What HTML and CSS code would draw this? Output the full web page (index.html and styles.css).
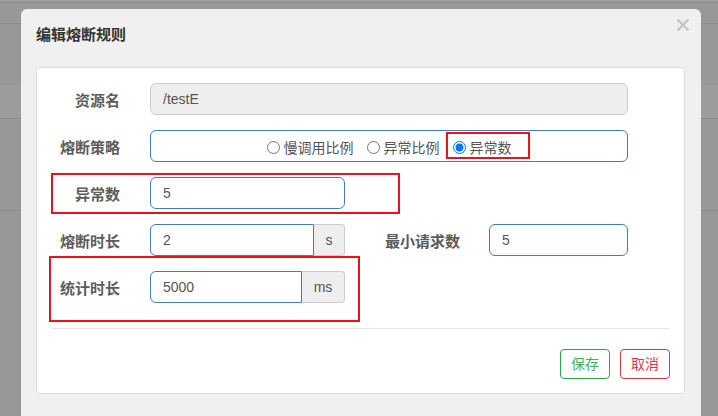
FILE: index.html
```html
<!DOCTYPE html>
<html lang="zh-CN">
<head>
<meta charset="utf-8">
<title>编辑熔断规则</title>
<link rel="stylesheet" href="styles.css">
</head>
<body>
<div class="page">
  <div class="bg-top"></div>
  <div class="bg-nav"></div>
  <div class="bg-band"></div>
  <div class="bg-block"></div>
  <div class="bg-rest"></div>
</div>

<div class="modal">
  <div class="modal-header">
    <div class="modal-title">编辑熔断规则</div>
    <svg class="close" width="12" height="12" viewBox="0 0 12 12"><path d="M1.5 1.5 L10.5 10.5 M10.5 1.5 L1.5 10.5" stroke="#c6c6c6" stroke-width="2.4" stroke-linecap="square"/></svg>
  </div>
  <div class="card">
    <div class="form">
      <div class="row">
        <div class="label">资源名</div>
        <div class="input disabled w-full">/testE</div>
      </div>
      <div class="row">
        <div class="label">熔断策略</div>
        <div class="radio-box w-full">
          <label class="opt"><input type="radio" name="s"><span>慢调用比例</span></label>
          <label class="opt"><input type="radio" name="s"><span>异常比例</span></label>
          <label class="opt"><input type="radio" name="s" checked><span>异常数</span></label>
        </div>
      </div>
      <div class="row">
        <div class="label">异常数</div>
        <div class="input focus w-195">5</div>
      </div>
      <div class="row">
        <div class="label">熔断时长</div>
        <div class="group">
          <div class="input focus grp w-164">2</div>
          <div class="addon w-31">s</div>
        </div>
        <div class="label2">最小请求数</div>
        <div class="input focus w-139">5</div>
      </div>
      <div class="row">
        <div class="label">统计时长</div>
        <div class="group">
          <div class="input focus grp w-152">5000</div>
          <div class="addon w-43">ms</div>
        </div>
      </div>
    </div>
    <div class="divider"></div>
    <div class="actions">
      <button class="btn btn-save">保存</button>
      <button class="btn btn-cancel">取消</button>
    </div>
    <div class="mark mark-radio"></div>
    <div class="mark mark-count"></div>
    <div class="mark mark-stat"></div>
  </div>
</div>
</body>
</html>
```

FILE: styles.css
```css
html, body {
  margin: 0;
  padding: 0;
}
body {
  width: 718px;
  height: 416px;
  overflow: hidden;
  background: #989898;
  font-family: "Liberation Sans", "Noto Sans CJK SC", sans-serif;
  position: relative;
}
.page {
  display: flex;
  flex-direction: column;
}
.bg-top {
  height: 2px;
  background: #9a9a9a;
  border-bottom: 1px solid #8a8a8a;
}
.bg-nav {
  height: 20px;
  border-bottom: 1px solid #8c8c8c;
}
.bg-band {
  height: 61px;
}
.bg-block {
  height: 33px;
  background: #9b9c9e;
  border-bottom: 1px solid #8c8c8c;
}
.bg-rest {
  height: 91px;
  border-bottom: 1px solid #8a8a8a;
}

.modal {
  position: absolute;
  left: 21px;
  top: 9px;
  width: 650px;
  height: 407px;
  padding: 0 15px;
  background: #f0f0f0;
  border-radius: 6px 6px 0 0;
  overflow: hidden;
}
.modal-header {
  height: 58px;
  position: relative;
}
.modal-title {
  padding-top: 16px;
  line-height: 20px;
  font-size: 15px;
  font-weight: bold;
  color: #333;
}
.close {
  position: absolute;
  top: 10px;
  right: -3px;
  display: block;
}

.card {
  position: relative;
  width: 617px;
  background: #fff;
  border: 1px solid #dcdcdc;
  border-radius: 4px;
  padding: 15px 15px 14px;
}
.form {
  display: flex;
  flex-direction: column;
  gap: 15px;
}
.row {
  display: flex;
  align-items: center;
  height: 32px;
}
.label {
  width: 68px;
  margin-right: 30px;
  padding-top: 3px;
  text-align: right;
  font-size: 15px;
  font-weight: bold;
  color: #5c5c5c;
  line-height: 20px;
  white-space: nowrap;
}
.label2 {
  width: 115px;
  margin-right: 29px;
  padding-top: 3px;
  text-align: right;
  font-size: 15px;
  font-weight: bold;
  color: #5c5c5c;
  line-height: 20px;
  white-space: nowrap;
}
.input {
  box-sizing: border-box;
  height: 32px;
  padding: 0 12px;
  font-size: 14px;
  line-height: 30px;
  color: #555;
  border: 1px solid #ccc;
  border-radius: 6px;
  background: #fff;
}
.input.disabled {
  background: #eee;
  border-color: #ccc;
}
.input.focus {
  border-color: #3d7dbd;
}
.input.grp {
  border-radius: 6px 0 0 6px;
}
.w-full { width: 478px; }
.w-195 { width: 195px; }
.w-164 { width: 164px; }
.w-152 { width: 152px; }
.w-139 { width: 139px; }
.w-31 { width: 31px; }
.w-43 { width: 43px; }

.group {
  display: flex;
  height: 32px;
}
.addon {
  box-sizing: border-box;
  height: 32px;
  line-height: 30px;
  text-align: center;
  font-size: 14px;
  color: #555;
  background: #eee;
  border: 1px solid #ccc;
  border-left: 0;
  border-radius: 0 4px 4px 0;
}

.radio-box {
  box-sizing: border-box;
  height: 32px;
  border: 1px solid #3d7dbd;
  border-radius: 6px;
  display: flex;
  justify-content: center;
  align-items: center;
  gap: 13px;
  padding-top: 3px;
}
.opt {
  display: flex;
  align-items: center;
  font-size: 14px;
  color: #555;
  line-height: 20px;
}
.opt input {
  width: 13px;
  height: 13px;
  margin: 0 4px 0 0;
}

.divider {
  margin-top: 25px;
  height: 1px;
  background: #e4e4e4;
}
.actions {
  margin-top: 20px;
  display: flex;
  justify-content: flex-end;
  gap: 10px;
  margin-right: -1px;
}
.btn {
  box-sizing: border-box;
  width: 50px;
  height: 30px;
  padding: 0;
  font-family: "Liberation Sans", "Noto Sans CJK SC", sans-serif;
  font-size: 14px;
  line-height: 28px;
  background: #fff;
  border-radius: 4px;
  border: 1px solid;
}
.btn-save {
  color: #3fae55;
  border-color: #28a745;
}
.btn-cancel {
  color: #dc3545;
  border-color: #dc3545;
}

.mark {
  position: absolute;
  box-sizing: border-box;
  border: 2px solid #e8131c;
}
.mark-radio {
  left: 409px;
  top: 64px;
  width: 84px;
  height: 27px;
}
.mark-count {
  left: 14px;
  top: 105px;
  width: 349px;
  height: 41px;
}
.mark-stat {
  left: 12px;
  top: 188px;
  width: 311px;
  height: 66px;
}
```
